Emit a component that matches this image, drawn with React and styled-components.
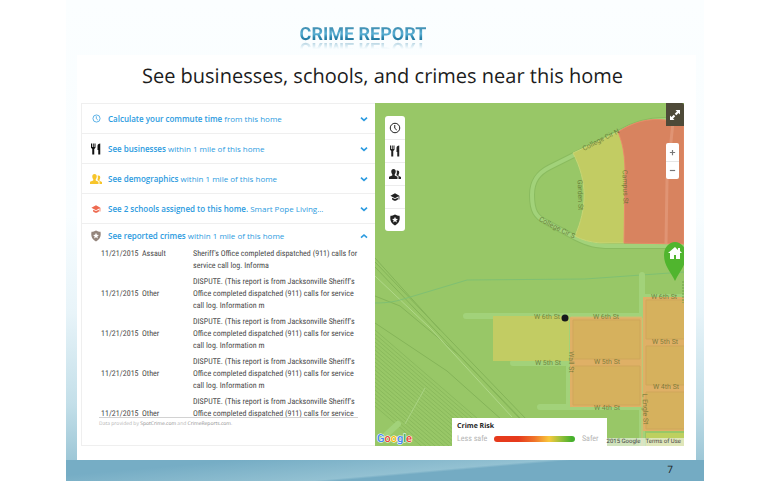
import React from "react";
import styled, { createGlobalStyle } from "styled-components";

const GlobalStyle = createGlobalStyle`
  * {
    box-sizing: border-box;
  }
  body {
    margin: 0;
    background: #fff;
    color: #1c1c1c;
    font-family: "Open Sans", "Noto Sans", sans-serif;
    text-rendering: geometricPrecision;
  }
  button {
    border: 0;
    padding: 0;
    background: none;
    font: inherit;
    color: inherit;
    cursor: pointer;
  }
`;

const Page = styled.div`
  padding: 0 66px;
`;

const Slide = styled.main`
  display: flex;
  flex-direction: column;
  min-height: 100vh;
  background: linear-gradient(#fbfeff 0%, #f8fdff 45%, #e8f4f9 65%, #c3dfe9 84%, #9cc6d6 96%);
`;

const Title = styled.h1`
  align-self: center;
  height: 24px;
  margin: 23px 44px 8px 0;
  font: 700 18px/24px Roboto, "Open Sans", sans-serif;
  color: transparent;
  background: linear-gradient(#3f8fb3 20%, #5cb0d4 45%, #2b86ae 60%, #1d6d93 80%);
  background-clip: text;
  -webkit-box-reflect: below -11px linear-gradient(transparent 45%, rgba(0, 0, 0, 0.4) 80%);
`;

const Card = styled.section`
  flex: 1;
  margin: 0 8px 0 11px;
  padding: 7px 12px 14px 4px;
  background: #fff;
`;

const Heading = styled.h2`
  margin: 0 0 13px;
  font-size: 20px;
  font-weight: 400;
  line-height: 28px;
  text-align: center;
`;

const Columns = styled.div`
  display: grid;
  grid-template-columns: 294fr 309fr;
`;

const Panel = styled.div`
  display: flex;
  flex-direction: column;
  border: 1px solid #efefef;
  border-right: 0;
`;

const Section = styled.button`
  display: flex;
  align-items: center;
  height: ${(p) => (p.$open ? 24 : 30)}px;
  padding: 0 7px 0 4px;
  border-bottom: ${(p) => (p.$open ? 0 : 1)}px solid #efefef;
  color: #2c9be0;
  text-align: left;
`;

const SectionIcon = styled.span`
  display: flex;
  justify-content: center;
  width: 20px;
  margin-right: 2px;
  color: ${(p) => p.$color};
`;

const SectionText = styled.span`
  flex: 1;
  font-size: 8px;
  line-height: 12px;
  white-space: nowrap;
`;

const SectionTitle = styled.strong`
  font-weight: 600;
`;

const Scroller = styled.div`
  height: 170px;
  margin: 0 17px;
  overflow-y: auto;
  scrollbar-width: none;
  border-bottom: 1px solid #d2d2d2;
`;

const CrimeTable = styled.table`
  width: 100%;
  border-spacing: 0;
  table-layout: fixed;
  color: #4a4a4a;
  font: 8px/12px "Roboto Condensed", "Open Sans", sans-serif;
`;

const Cell = styled.td`
  width: ${(p) => (p.$w ? `${p.$w}px` : "auto")};
  padding: 0 0 4px 2px;
  vertical-align: ${(p) => (p.$top ? "top" : "middle")};
`;

const Source = styled.p`
  margin: 2px 17px 17px;
  color: #b4b4b4;
  font-size: 5px;
  line-height: 8px;
`;

const SourceLink = styled.a`
  color: #8c8c8c;
  text-decoration: none;
`;

const MapBox = styled.div`
  position: relative;
  display: flex;
  flex-direction: column;
  justify-content: space-between;
  overflow: hidden;
`;

const MapDrawing = styled.svg`
  position: absolute;
  inset: 0;
  width: 100%;
  height: 100%;
`;

const Street = styled.text`
  fill: #5a6a2c;
  fill-opacity: 0.75;
  font: 7px Roboto, sans-serif;
  text-anchor: middle;
  dominant-baseline: central;
`;

const MapTop = styled.div`
  position: relative;
  display: flex;
  justify-content: space-between;
`;

const Toolbar = styled.div`
  display: flex;
  flex-direction: column;
  width: 20px;
  margin: 13px 0 0 10px;
  border-radius: 3px;
  background: #fff;
`;

const Tool = styled.button`
  display: flex;
  align-items: center;
  justify-content: center;
  height: 23px;
  color: #222;

  & + & {
    border-top: 1px solid #ececec;
  }
`;

const Controls = styled.div`
  display: flex;
  flex-direction: column;
  align-items: flex-end;
`;

const Expand = styled.button`
  display: flex;
  align-items: center;
  justify-content: center;
  width: 18px;
  height: 23px;
  border-radius: 0 2px 0 0;
  background: #4e4a38;
  color: #fff;
`;

const Zoom = styled.div`
  width: 13px;
  margin: 17px 5px 0 0;
  border-radius: 2px;
  background: #fff;
`;

const ZoomButton = styled.button`
  display: flex;
  align-items: center;
  justify-content: center;
  width: 100%;
  height: 18px;
  color: #777;

  & + & {
    border-top: 1px solid #e6e6e6;
  }
`;

const MapBottom = styled.div`
  position: relative;
  display: flex;
  align-items: flex-end;
`;

const GoogleMark = styled.div`
  width: 77px;
  padding-left: 2px;
  font: 500 11px/14px Roboto, sans-serif;
`;

const Letter = styled.span`
  color: ${(p) => p.$c};
  paint-order: stroke fill;
  -webkit-text-stroke: 1px #fff;
`;

const Legend = styled.div`
  flex: 1;
  padding: 3px 8px 1px 5px;
  background: #fff;
`;

const LegendTitle = styled.div`
  font-size: 7px;
  font-weight: 700;
  line-height: 12px;
`;

const Scale = styled.div`
  display: flex;
  align-items: center;
  gap: 7px;
  color: #b5b5b5;
  font: 8px/12px "Roboto Condensed", "Open Sans", sans-serif;
`;

const Bar = styled.div`
  flex: 1;
  height: 6px;
  border-radius: 3px;
  background: linear-gradient(90deg, #e63a1c 30%, #f0742a 50%, #f8c83c 68%, #9cc03a 82%, #46b02c 96%);
`;

const Credits = styled.div`
  display: flex;
  gap: 5px;
  padding: 0 3px 0 0;
  background: rgba(245, 245, 245, 0.6);
  color: #444;
  font: 6px/8px Roboto, sans-serif;
`;

const CreditLink = styled.a`
  color: inherit;
  text-decoration: none;
`;

const Footer = styled.footer`
  height: 21px;
  padding-right: 31px;
  background: linear-gradient(175deg, #76adc5 20%, #93c1d2 55%, #74abc3 58%);
  font-size: 10px;
  line-height: 18px;
  text-align: right;
`;

const ICONS = {
  clock: (
    <g fill="none" stroke="currentColor" strokeWidth="2">
      <circle cx="12" cy="12" r="9.5" />
      <path d="M11.5 6v6.5l4 3.5" />
    </g>
  ),
  food: (
    <g fill="currentColor">
      <path d="M2 1h2v7h1.5V1h2v7H9V1h2v8.5L8.5 12v11h-4V12L2 9.5z" />
      <path d="M20.5 1v22h-4V14H15V6c0-3 2-5 5.5-5z" />
    </g>
  ),
  people: (
    <g fill="currentColor">
      <path d="M9 2c3 0 4.5 2 4.5 5 0 2.5-1 4-2 5.500V15l5.5 2.500V22H0v-4.500L6.500 15v-2.500C5.500 11 4.500 9.500 4.500 7 4.500 4 6 2 9 2z" />
      <path d="M17 5c2.500 0 3.500 1.800 3.500 4 0 2-.8 3.500-1.500 4.500v2l5 2.500v4h-5v-5.500l-4-2v-2c1-1.500 1-5.500 0-7 .5-.4 1.200-.5 2-.5z" />
    </g>
  ),
  school: (
    <g fill="currentColor">
      <path d="M12 3 1 9l11 6 8.500-4.600V18h2V9z" />
      <path d="M5 13.500v4c2 2.500 4 3.500 7 3.500s5-1 7-3.500v-4L12 17z" />
    </g>
  ),
  shield: (
    <path
      fill="currentColor"
      fillRule="evenodd"
      d="M12 1c3 2 6 2.500 9 2.500 1.500 8-.5 15-9 19.500C3.500 18.500 1.500 11.500 3 3.500c3 0 6-.5 9-2.500zm0 4.500-1.700 4-4.300.3 3.300 2.800-1 4.400 3.700-2.400 3.700 2.400-1-4.400L18 9.800l-4.300-.3z"
    />
  ),
  down: <path d="m3 8 9 8 9-8" fill="none" stroke="currentColor" strokeWidth="5" />,
  up: <path d="m3 17 9-8 9 8" fill="none" stroke="currentColor" strokeWidth="5" />,
  expand: (
    <g fill="currentColor">
      <path d="M13 2h9v9l-3-3-4.500 4.500-3-3L16 5z" />
      <path d="M11 22H2v-9l3 3 4.500-4.500 3 3L8 19z" />
    </g>
  ),
  plus: <path d="M12 3v18M3 12h18" fill="none" stroke="currentColor" strokeWidth="4" />,
  minus: <path d="M3 12h18" fill="none" stroke="currentColor" strokeWidth="4" />,
};

const Icon = ({ name, size }) => (
  <svg viewBox="0 0 24 24" width={size} height={size} aria-hidden="true">
    {ICONS[name]}
  </svg>
);

const SECTIONS = [
  { icon: "clock", size: 9, color: "#2c9be0", title: "Calculate your commute time", rest: "from this home" },
  { icon: "food", size: 12, color: "#111", title: "See businesses", rest: "within 1 mile of this home" },
  { icon: "people", size: 12, color: "#f7c52b", title: "See demographics", rest: "within 1 mile of this home" },
  { icon: "school", size: 10, color: "#ee6a50", title: "See 2 schools assigned to this home.", rest: "Smart Pope Living..." },
  { icon: "shield", size: 12, color: "#94857c", title: "See reported crimes", rest: "within 1 mile of this home", open: true },
];

const DISPUTE =
  "DISPUTE. (This report is from Jacksonville Sheriff's Office completed dispatched (911) calls for service call log. Information m";

const CRIMES = [
  { date: "11/21/2015", type: "Assault", text: "Sheriff's Office completed dispatched (911) calls for service call log. Informa" },
  { date: "11/21/2015", type: "Other", text: DISPUTE },
  { date: "11/21/2015", type: "Other", text: DISPUTE },
  { date: "11/21/2015", type: "Other", text: DISPUTE },
  { date: "11/21/2015", type: "Other", text: DISPUTE },
];

const LAYERS = [
  { icon: "clock", size: 12, label: "Commute" },
  { icon: "food", size: 12, label: "Businesses" },
  { icon: "people", size: 12, label: "Demographics" },
  { icon: "school", size: 10, label: "Schools" },
  { icon: "shield", size: 12, label: "Crimes" },
];

const LABELS = [
  { x: 547, y: 317, text: "W 6th St" },
  { x: 606, y: 317, text: "W 6th St" },
  { x: 664, y: 297, text: "W 6th St" },
  { x: 548, y: 363, text: "W 5th St" },
  { x: 607, y: 362, text: "W 5th St" },
  { x: 665, y: 342, text: "W 5th St" },
  { x: 607, y: 408, text: "W 4th St" },
  { x: 666, y: 387, text: "W 4th St" },
  { x: 571, y: 362, text: "Wall St", turn: 90 },
  { x: 645, y: 409, text: "L Engle St", turn: 88 },
  { x: 601, y: 140, text: "College Cir N", turn: -27 },
  { x: 557, y: 228, text: "College Cir S", turn: 27 },
  { x: 580, y: 195, text: "Garden St", turn: 88 },
  { x: 625, y: 187, text: "Campus St", turn: 88 },
];

const GOOGLE = [
  ["G", "#4285f4"],
  ["o", "#ea4335"],
  ["o", "#fbbc05"],
  ["g", "#4285f4"],
  ["l", "#34a853"],
  ["e", "#ea4335"],
];

const TRACKS = Array.from({ length: 20 }, (_, i) => i * 4);

const ROAD_LOOP =
  "M684 122c-25-5-45-1-64 10l-70 35c-12 6-18 14-18 28 0 16 4 22 14 27l30 16c12 6 20 8 34 8h74";

const MapArt = () => (
  <MapDrawing viewBox="375 103 309 343" preserveAspectRatio="xMidYMid slice" role="img" aria-label="Crime risk map">
    <rect x="375" y="103" width="309" height="343" fill="#98c767" />

    {/* rail yard */}
    <g fill="none" stroke="#84b458">
      <path d="M375 262 527 420M375 267 521 420M375 258 440 330M375 296l25 10 60 50 62 64M375 323l72 48 55 49" />
      <g opacity=".7">
        {TRACKS.map((d) => (
          <path key={d} d={`M375 ${330 + d}l125 108`} />
        ))}
      </g>
    </g>
    <path d="M375 276 430 328 512 417" fill="none" stroke="#b0d889" />
    <path d="m425 388-20 36" fill="none" stroke="#a9d383" />
    <path d="M375 303c15 0 22-2 32-5l60-18 118-1 99-7" fill="none" stroke="#7fc072" />

    {/* roads */}
    <g fill="none" stroke="#a2d27a" strokeWidth="6" strokeLinecap="round" strokeLinejoin="round">
      <path d={ROAD_LOOP} stroke="#8abb5f" />
      <path d={ROAD_LOOP} strokeWidth="4" />
      <path d="M466 316h176M513 363h57M540 407h102M569 317v90M642 275v171M642 297h42M398 424l-12 11" />
    </g>

    {/* risk areas */}
    <path d="M573 153l45-21c6 14 7 28 7 42l-1 69h-24c-10-1-18-3-25-7 12-28 13-54-2-83z" fill="#c2cc63" stroke="#c6d676" />
    <path d="M618 132c15-10 30-14 47-12l19 2v122l-60-1 1-69c0-14-1-28-7-42z" fill="#d8835f" stroke="#e98a67" />
    <path d="m673 122-6 58-1 64" fill="none" stroke="#e09474" strokeWidth="3" />
    <path d="M493 316h76v45h-76z" fill="#c2cc63" />
    <path d="M570 317h72v90h-72z" fill="#dfb066" />
    <path d="M643 297h41v134h-41z" fill="#dfb066" />
    <path d="M646 433h38v13h-38z" fill="#bdd05f" />
    <g fill="#d6b15d" stroke="#cfa75a">
      <path d="M573 320h67v39h-67zM573 366h67v39h-67z" />
      <path d="M646 300h40v39h-40zM646 346h40v39h-40zM646 392h40v37h-40z" />
    </g>
    <path d="M642 318v128M571 317h71" fill="none" stroke="#d3bf72" />
    <path d="M683 281v22" stroke="#6fa14c" strokeDasharray="2 1" />

    {LABELS.map((l) => (
      <Street key={`${l.x}-${l.y}`} x={l.x} y={l.y} transform={`rotate(${l.turn || 0} ${l.x} ${l.y})`}>
        {l.text}
      </Street>
    ))}

    <circle cx="565" cy="318" r="3.5" fill="#15191c" />
    <path d="M675 281c-4-9-11-15-11-26a11 13 0 0 1 22 0c0 11-7 17-11 26z" fill="#50b52e" />
    <path d="m675 247-7 6h2v6h4v-4h2v4h4v-6h2l-2-2v-3h-2v2z" fill="#fff" />
  </MapDrawing>
);

export default function App() {
  return (
    <Page>
      <GlobalStyle />
      <Slide>
        <Title>CRIME REPORT</Title>
        <Card>
          <Heading>See businesses, schools, and crimes near this home</Heading>
          <Columns>
            <Panel>
              {SECTIONS.map((s) => (
                <Section key={s.title} type="button" aria-expanded={!!s.open} $open={s.open}>
                  <SectionIcon $color={s.color}>
                    <Icon name={s.icon} size={s.size} />
                  </SectionIcon>
                  <SectionText>
                    <SectionTitle>{s.title}</SectionTitle> {s.rest}
                  </SectionText>
                  <Icon name={s.open ? "up" : "down"} size={8} />
                </Section>
              ))}
              <Scroller>
                <CrimeTable>
                  <tbody>
                    {CRIMES.map((c, i) => (
                      <tr key={i}>
                        <Cell $w={41} $top={i === 0}>{c.date}</Cell>
                        <Cell $w={51} $top={i === 0}>{c.type}</Cell>
                        <Cell>{c.text}</Cell>
                      </tr>
                    ))}
                  </tbody>
                </CrimeTable>
              </Scroller>
              <Source>
                Data provided by <SourceLink href="#spotcrime">SpotCrime.com</SourceLink> and{" "}
                <SourceLink href="#crimereports">CrimeReports.com</SourceLink>.
              </Source>
            </Panel>

            <MapBox>
              <MapArt />
              <MapTop>
                <Toolbar>
                  {LAYERS.map((l) => (
                    <Tool key={l.icon} type="button" aria-label={l.label}>
                      <Icon name={l.icon} size={l.size} />
                    </Tool>
                  ))}
                </Toolbar>
                <Controls>
                  <Expand type="button" aria-label="Full screen">
                    <Icon name="expand" size={12} />
                  </Expand>
                  <Zoom>
                    <ZoomButton type="button" aria-label="Zoom in">
                      <Icon name="plus" size={7} />
                    </ZoomButton>
                    <ZoomButton type="button" aria-label="Zoom out">
                      <Icon name="minus" size={7} />
                    </ZoomButton>
                  </Zoom>
                </Controls>
              </MapTop>
              <MapBottom>
                <GoogleMark>
                  {GOOGLE.map(([ch, color], i) => (
                    <Letter key={i} $c={color}>{ch}</Letter>
                  ))}
                </GoogleMark>
                <Legend>
                  <LegendTitle>Crime Risk</LegendTitle>
                  <Scale>
                    <span>Less safe</span>
                    <Bar />
                    <span>Safer</span>
                  </Scale>
                </Legend>
                <Credits>
                  <span>2015 Google</span>
                  <CreditLink href="#terms">Terms of Use</CreditLink>
                </Credits>
              </MapBottom>
            </MapBox>
          </Columns>
        </Card>
        <Footer>7</Footer>
      </Slide>
    </Page>
  );
}
